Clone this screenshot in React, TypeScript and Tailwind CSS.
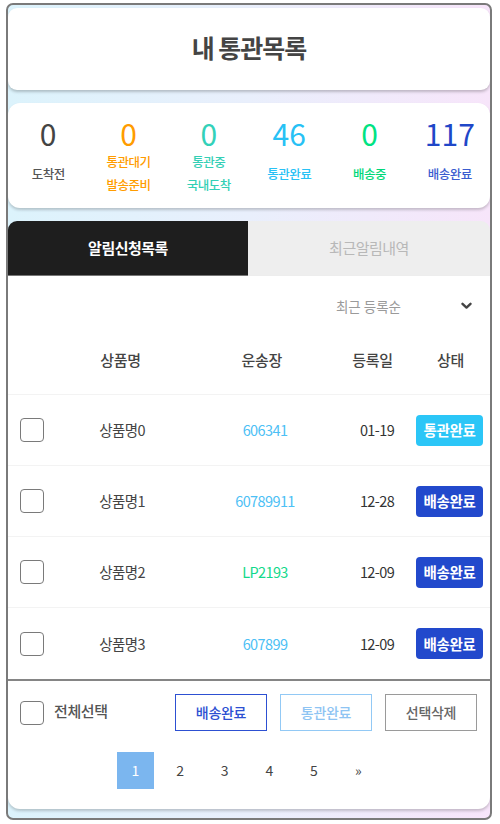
import React from "react";

const stats = [
  { n: "0", c: "text-[#444444]", l: ["도착전"], lc: "text-[#555555]" },
  { n: "0", c: "text-[#ff9c00]", l: ["통관대기", "발송준비"], lc: "text-[#ff9c00]" },
  { n: "0", c: "text-[#33d1b9]", l: ["통관중", "국내도착"], lc: "text-[#33cfb5]" },
  { n: "46", c: "text-[#27c1f5]", l: ["통관완료"], lc: "text-[#27c1f5]" },
  { n: "0", c: "text-[#00e383]", l: ["배송중"], lc: "text-[#00d879]" },
  { n: "117", c: "text-[#1f47c8]", l: ["배송완료"], lc: "text-[#3a5ccf]" },
];

const rows = [
  { name: "상품명0", no: "606341", nc: "text-[#4cc0f5]", date: "01-19", st: "통관완료", sc: "bg-[#2bc6f7]" },
  { name: "상품명1", no: "60789911", nc: "text-[#4cc0f5]", date: "12-28", st: "배송완료", sc: "bg-[#2249cc]" },
  { name: "상품명2", no: "LP2193", nc: "text-[#12d98b]", date: "12-09", st: "배송완료", sc: "bg-[#2249cc]" },
  { name: "상품명3", no: "607899", nc: "text-[#4cc0f5]", date: "12-09", st: "배송완료", sc: "bg-[#2249cc]" },
];

function Box() {
  return <div className="w-[24px] h-[24px] rounded-[4px] border-[1.5px] border-[#7a7a7a] bg-white" />;
}

export default function App() {
  return (
    <div
      className="w-[500px] h-[824px] bg-white pt-[3px] pl-[6px]"
      style={{ fontFamily: '"Noto Sans CJK KR", "Noto Sans", sans-serif' }}
    >
      <div className="w-[486px] h-[817px] border-2 border-[#7a7a7a] rounded-[7px] bg-linear-to-r from-[#dcf3fc] via-[#e9effc] to-[#f7e5fa] pt-[3px] overflow-hidden flex flex-col">
        {/* header */}
        <div className="h-[82px] bg-white rounded-[9px] shadow-[0_2px_3px_rgba(0,0,0,0.22)] flex items-center justify-center">
          <h1 className="text-[25px] font-bold text-[#444444] tracking-[-1px] leading-none -mt-[3px]">내 통관목록</h1>
        </div>

        {/* stats */}
        <div className="mt-[13px] h-[105px] bg-white rounded-[12px] shadow-[0_2px_3px_rgba(0,0,0,0.2)] grid grid-cols-6 pt-[10px]">
          {stats.map((s, i) => (
            <div key={i} className="flex flex-col items-center">
              <div className={`h-[40px] leading-[40px] text-[30px] ${s.c}`}>{s.n}</div>
              <div className="h-[40px] flex flex-col items-center justify-center">
                {s.l.map((t) => (
                  <div key={t} className={`leading-[23px] text-[12.5px] font-medium tracking-[-0.5px] ${s.lc}`}>{t}</div>
                ))}
              </div>
            </div>
          ))}
        </div>

        {/* tabs */}
        <div className="mt-[13px] grid grid-cols-[240px_1fr] h-[55px]">
          <div className="bg-[#1e1e1e] rounded-tl-[9px] border-b border-[#777777] flex items-center justify-center text-white text-[15px] font-semibold tracking-[-0.5px]">
            알림신청목록
          </div>
          <div className="bg-[#eeeeee] rounded-tr-[9px] flex items-center justify-center text-[#b8b8b8] text-[15px] tracking-[-0.5px]">
            최근알림내역
          </div>
        </div>

        {/* list */}
        <div className="bg-white flex flex-col rounded-b-[12px] shadow-[0_2px_3px_rgba(0,0,0,0.2)]">
          <div className="h-[60px] flex items-center justify-end pr-[18px]">
            <span className="text-[13.5px] text-[#9a9a9a]">최근 등록순</span>
            <svg className="ml-[60px]" width="11" height="8" viewBox="0 0 11 8">
              <path d="M1.5 1.8 L5.5 5.6 L9.5 1.8" fill="none" stroke="#444" strokeWidth="2.4" strokeLinecap="round" strokeLinejoin="round" />
            </svg>
          </div>
          <div className="h-[58px] pb-[10px] flex items-center text-[15px] font-medium text-[#444444] tracking-[-0.3px]">
            <div className="w-[36px]" />
            <div className="w-[156px] text-center">상품명</div>
            <div className="w-[130px] text-center">운송장</div>
            <div className="w-[84px] pl-[10px] text-center">등록일</div>
            <div className="w-[80px] ml-[2px] text-center">상태</div>
          </div>
          {rows.map((r, i) => (
            <div key={i} className={`${i === 3 ? "h-[72px]" : "h-[71px]"} border-t border-[#f3f3f3] flex items-center text-[14.5px] tracking-[-0.6px]`}>
              <div className="w-[36px] pl-[12px]">
                <Box />
              </div>
              <div className="w-[156px] text-center text-[#444444]">{r.name}</div>
              <div className={`w-[130px] text-center ${r.nc}`}>{r.no}</div>
              <div className="w-[84px] pl-[10px] text-center text-[#333333]">{r.date}</div>
              <div className={`ml-[2px] w-[67px] h-[31px] rounded-[4px] ${r.sc} text-white font-semibold flex items-center justify-center tracking-[-0.3px]`}>
                {r.st}
              </div>
            </div>
          ))}
          <div className="border-t-2 border-[#858585] pt-[13px] pb-[20px] flex flex-col">
            <div className="flex items-center h-[37px]">
              <div className="pl-[12px] flex items-center">
                <Box />
                <span className="ml-[10px] text-[15px] font-medium text-[#555555] tracking-[-0.4px] -mt-[2px]">전체선택</span>
              </div>
              <div className="ml-auto pr-[13px] flex gap-[13px]">
                <button className="w-[92px] h-[37px] border-[1.5px] border-[#2d50d2] text-[#2d50d2] text-[14px] font-medium bg-white tracking-[-0.3px]">배송완료</button>
                <button className="w-[92px] h-[37px] border-[1.5px] border-[#92c9f5] text-[#8ec4f3] text-[14px] font-medium bg-white tracking-[-0.3px]">통관완료</button>
                <button className="w-[92px] h-[37px] border-[1.5px] border-[#9a9a9a] text-[#666666] text-[14px] font-medium bg-white tracking-[-0.3px]">선택삭제</button>
              </div>
            </div>
            <div className="mt-[21px] h-[37px] flex pl-[109px] gap-[7.6px] text-[14px] text-[#444444]">
              <div className="w-[37px] h-[37px] bg-[#7bb6ef] text-white flex items-center justify-center">1</div>
              {["2", "3", "4", "5", "»"].map((p) => (
                <div key={p} className="w-[37px] h-[37px] flex items-center justify-center">{p}</div>
              ))}
            </div>
          </div>
        </div>
      </div>
    </div>
  );
}
